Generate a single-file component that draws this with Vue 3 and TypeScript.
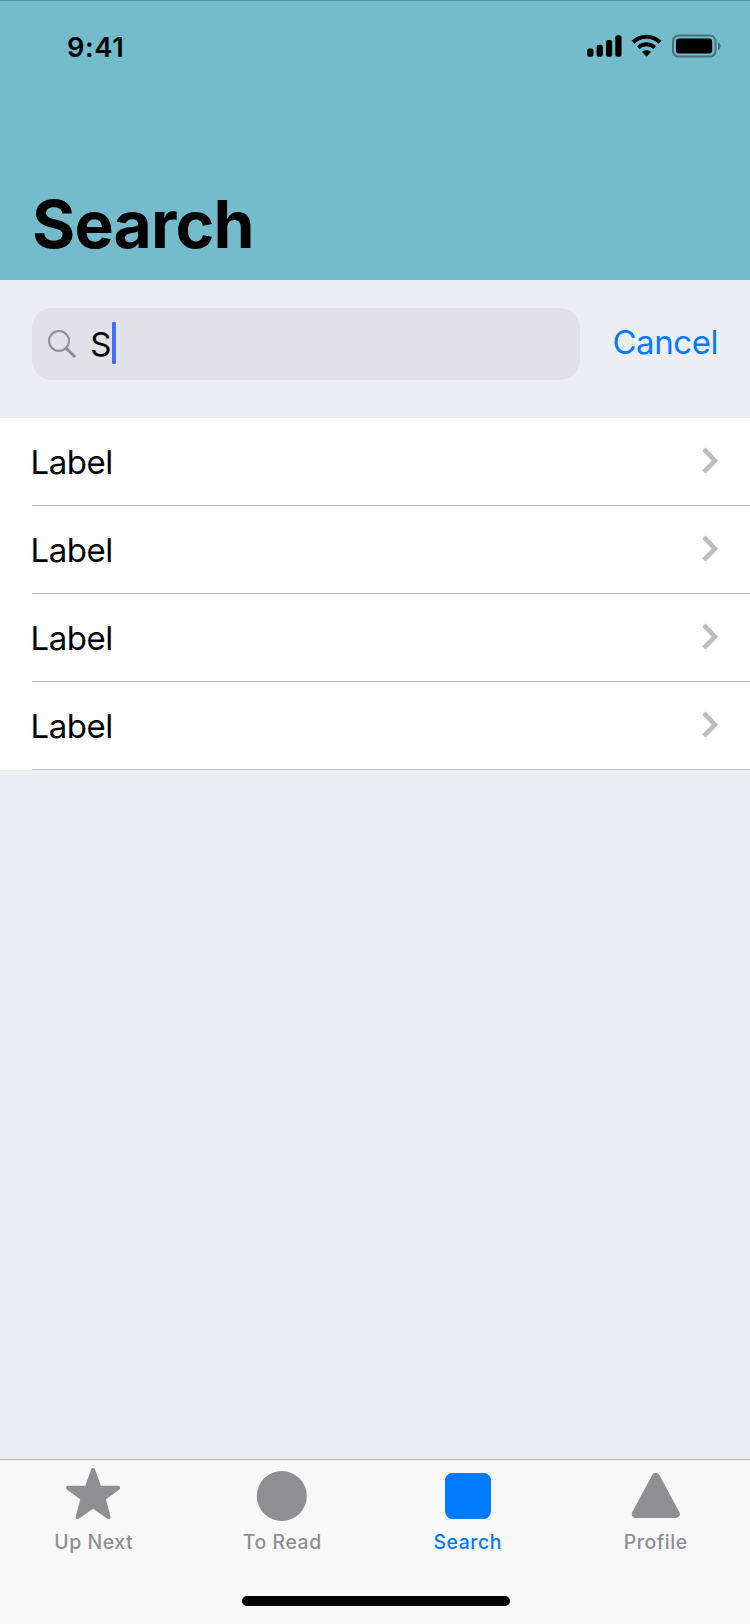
<script setup lang="ts">
import { ref } from 'vue'

type Shape = 'star' | 'circle' | 'square' | 'triangle'
interface Tab {
  label: string
  shape: Shape
}

const query = ref('S')
const active = ref('Search')
const rows: string[] = ['Label', 'Label', 'Label', 'Label']
const tabs: Tab[] = [
  { label: 'Up Next', shape: 'star' },
  { label: 'To Read', shape: 'circle' },
  { label: 'Search', shape: 'square' },
  { label: 'Profile', shape: 'triangle' },
]
</script>

<template>
  <div class="screen">
    <header class="header">
      <div class="status">
        <span class="time">9:41</span>
        <svg class="indicators" width="136" height="26" viewBox="0 0 136 26">
          <rect x="0.2" y="15.6" width="6.2" height="8.2" rx="2" />
          <rect x="9.6" y="11.7" width="6.2" height="12.1" rx="2" />
          <rect x="19" y="7" width="6.2" height="16.8" rx="2" />
          <rect x="28.3" y="2.2" width="6.2" height="21.6" rx="2" />
          <g fill="none" stroke="#000">
            <path d="M46 9.2C53.4 1.9 65.6 1.9 73 9.2" stroke-width="4.1" />
            <path d="M51.2 14.6C55.9 10.1 63.1 10.1 67.8 14.6" stroke-width="3.9" />
          </g>
          <path d="M55 19C57.5 16.6 61.5 16.6 64 19L59.9 23.2Q59.5 23.6 59.1 23.2Z" />
          <rect x="86" y="2.6" width="42.5" height="21" rx="5.6" fill="none" stroke="#000" stroke-width="2" opacity="0.38" />
          <rect x="89" y="5.6" width="36.2" height="15" rx="3" />
          <path d="M131 9.2C134.6 10.8 134.6 15.5 131 17.1Z" opacity="0.42" />
        </svg>
      </div>
      <h1 class="title">Search</h1>
    </header>

    <section class="search">
      <div class="field">
        <svg class="glass" width="30" height="30" viewBox="0 0 30 30" fill="none" stroke="#8e8e93">
          <circle cx="12" cy="12" r="10" stroke-width="2" />
          <path d="M19.2 19.2L27.3 27.2" stroke-width="3" stroke-linecap="round" />
        </svg>
        <span class="query">{{ query }}</span>
        <span class="caret"></span>
      </div>
      <button class="cancel" type="button">Cancel</button>
    </section>

    <ul class="list">
      <li v-for="(row, i) in rows" :key="i" class="row">
        <span class="row-label">{{ row }}</span>
        <svg class="chevron" width="17" height="28" viewBox="0 0 17 28" fill="none" stroke="#bdbdbf" stroke-width="4.6">
          <path d="M1.9 2.2L12.9 13.7L1.9 25.2" />
        </svg>
      </li>
    </ul>

    <nav class="tabs">
      <div
        v-for="tab in tabs"
        :key="tab.label"
        class="tab"
        :class="[tab.shape, { active: tab.label === active }]"
        @click="active = tab.label"
      >
        <svg class="shape" width="60" height="60" viewBox="0 0 60 60" fill="currentColor" stroke="currentColor" stroke-linejoin="round">
          <path
            v-if="tab.shape === 'star'"
            stroke-width="4"
            d="M29.1 5L35.5 22.8H54.2L39.6 33.6L44.6 52L29.1 41.4L13.6 52L18.6 33.6L4 22.8H22.7Z"
          />
          <circle v-else-if="tab.shape === 'circle'" cx="30.8" cy="31" r="25" stroke="none" />
          <rect v-else-if="tab.shape === 'square'" x="6" y="8" width="46" height="46" rx="7.5" stroke="none" />
          <path v-else stroke-width="8" d="M29.8 12L49.8 49H9.8Z" />
        </svg>
        <span class="tab-label">{{ tab.label }}</span>
      </div>
      <div class="home"></div>
    </nav>
  </div>
</template>

<style>
body {
  margin: 0;
}
</style>

<style scoped>
.screen {
  width: 750px;
  height: 1624px;
  display: flex;
  flex-direction: column;
  background: #edeef4;
  color: #000;
  font-family: Inter, "Liberation Sans", sans-serif;
  overflow: hidden;
}
.header {
  height: 280px;
  box-sizing: border-box;
  flex: none;
  background: #74bbcb;
  border-top: 1px solid #558a99;
}
.status {
  height: 94px;
  display: flex;
  justify-content: space-between;
  padding: 0 27px 0 67px;
}
.time {
  line-height: 94px;
  font-size: 27.3px;
  font-weight: 600;
  letter-spacing: 0.6px;
}
.indicators {
  margin-top: 32px;
}
.title {
  margin: 79px 0 0 32px;
  font-size: 66px;
  line-height: 100px;
  font-weight: 700;
  letter-spacing: -0.8px;
}
.search {
  height: 138px;
  flex: none;
  box-sizing: border-box;
  display: flex;
  align-items: flex-start;
  justify-content: space-between;
  padding: 28px 32px 0;
}
.field {
  width: 548px;
  height: 72px;
  display: flex;
  align-items: center;
  border-radius: 20px;
  background: #e2e1e7;
}
.glass {
  margin-left: 15px;
}
.query {
  margin-left: 13.3px;
  width: 21.7px;
  font-size: 33px;
  line-height: 70px;
}
.caret {
  width: 4px;
  height: 42px;
  margin-bottom: 2px;
  border-radius: 1px;
  background: #456df2;
}
.cancel {
  border: 0;
  padding: 0;
  background: none;
  color: #007aff;
  font: inherit;
  font-size: 33px;
  line-height: 68px;
  letter-spacing: -0.45px;
}
.list {
  margin: 0;
  padding: 0 0 0 32px;
  flex: none;
  list-style: none;
  background: #fff;
}
.row {
  height: 88px;
  box-sizing: border-box;
  display: flex;
  align-items: flex-start;
  justify-content: space-between;
  padding-right: 31px;
  border-bottom: 1px solid #bcbbc1;
}
.row-label {
  margin-left: -1.4px;
  font-size: 33px;
  line-height: 88px;
  letter-spacing: -0.5px;
}
.chevron {
  margin-top: 29px;
}
.tabs {
  position: relative;
  height: 165px;
  box-sizing: border-box;
  margin-top: auto;
  flex: none;
  display: grid;
  grid-template-columns: repeat(4, 1fr);
  background: #f8f8f8;
  border-top: 1px solid #b3b3b8;
}
.tab {
  display: flex;
  flex-direction: column;
  align-items: center;
  padding-top: 5px;
  color: #8e8e93;
}
.tab.active {
  color: #007aff;
}
.tab-label {
  font-size: 19.4px;
  line-height: 34px;
  font-weight: 500;
  letter-spacing: 0.6px;
}
.tab.circle .tab-label {
  margin-left: 2px;
}
.tab.square .tab-label {
  margin-right: 2px;
}
.tab.triangle .tab-label {
  margin-right: 1px;
}
.home {
  position: absolute;
  left: 242px;
  bottom: 18px;
  width: 268px;
  height: 10px;
  border-radius: 5px;
  background: #000;
}
</style>
